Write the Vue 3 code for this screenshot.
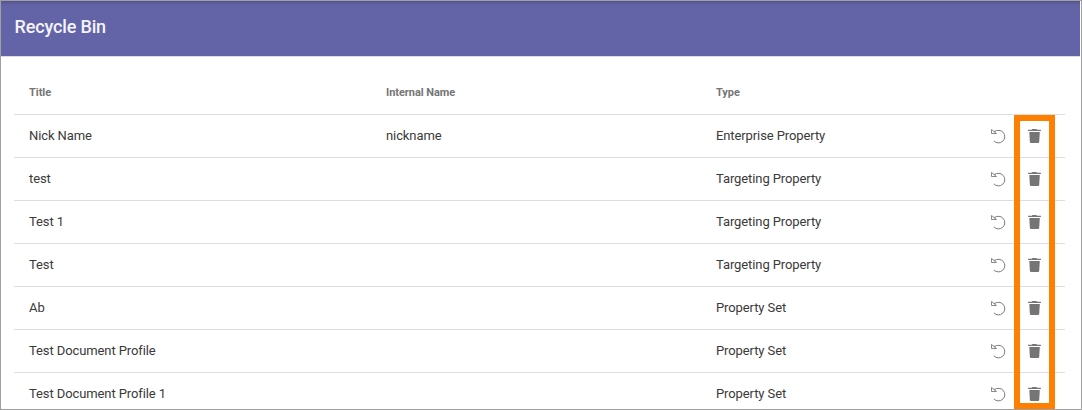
<script setup>
const rows = [
  { title: 'Nick Name', internal: 'nickname', type: 'Enterprise Property' },
  { title: 'test', internal: '', type: 'Targeting Property' },
  { title: 'Test 1', internal: '', type: 'Targeting Property' },
  { title: 'Test', internal: '', type: 'Targeting Property' },
  { title: 'Ab', internal: '', type: 'Property Set' },
  { title: 'Test Document Profile', internal: '', type: 'Property Set' },
  { title: 'Test Document Profile 1', internal: '', type: 'Property Set' },
]
</script>

<template>
  <div class="window">
    <header class="bar"><h1>Recycle Bin</h1></header>
    <main class="list">
      <div class="row head">
        <span>Title</span>
        <span>Internal Name</span>
        <span>Type</span>
      </div>
      <div v-for="row in rows" :key="row.title" class="row">
        <span>{{ row.title }}</span>
        <span>{{ row.internal }}</span>
        <span>{{ row.type }}</span>
        <svg class="icon" width="18" height="18" viewBox="0 0 18 18" fill="none" stroke="#7c7c7c" stroke-width="1">
          <path d="M5.4 4.8A6.3 6.3 0 1 1 4.9 13.9" />
          <path d="M2.5 2.5V6.5H7.5L5.3 4.7L6 3.6M2.5 2.5L5.3 4.7" stroke-width=".9" />
        </svg>
        <svg class="icon" width="18" height="18" viewBox="0 0 18 18" fill="#757575">
          <path d="M3.1 2.8H6.8L7.5 2H11.3L12 2.8H15.9V4.1H3.1Z" />
          <path d="M4.3 5.1H14.8L14.2 15Q14.1 16 13.1 16H6Q5 16 4.9 15Z" />
        </svg>
      </div>
    </main>
    <div class="highlight"></div>
  </div>
</template>

<style>
body {
  overflow: hidden;
}
</style>

<style scoped>
.window {
  position: relative;
  box-sizing: border-box;
  width: 1082px;
  height: 410px;
  overflow: hidden;
  border: 1px solid #a0a0a0;
  background: #fff;
  font-family: Roboto, "Liberation Sans", sans-serif;
}
.bar {
  box-sizing: border-box;
  height: 56px;
  margin-right: 1px;
  padding: 0 13.5px;
  border-bottom: 1px solid #dcdce2;
  background: linear-gradient(#50508a 0, #5d5d9c 2px, #6264a7 5px);
}
h1 {
  margin: 0;
  color: #f4f4fa;
  font-size: 18px;
  font-weight: 500;
  line-height: 52px;
  letter-spacing: -0.15px;
}
.list {
  width: 1051px;
  margin-left: 13px;
  padding-top: 14px;
}
.row {
  display: grid;
  grid-template-columns: 357px 330px 273px 36px 18px;
  align-items: center;
  box-sizing: border-box;
  height: 43px;
  padding: 0 0 1px 15px;
  border-bottom: 1px solid #dedede;
  color: #3a3a3a;
  font-size: 13px;
  letter-spacing: -0.1px;
  white-space: nowrap;
}
.head {
  height: 44px;
  padding-bottom: 0;
  color: #757575;
  font-size: 11px;
  font-weight: 700;
  letter-spacing: -0.05px;
}
.icon {
  display: block;
  margin-top: 1px;
}
.highlight {
  position: absolute;
  top: 114px;
  left: 1013px;
  box-sizing: border-box;
  width: 41px;
  height: 294px;
  border: 6px solid #ff8000;
}
</style>
